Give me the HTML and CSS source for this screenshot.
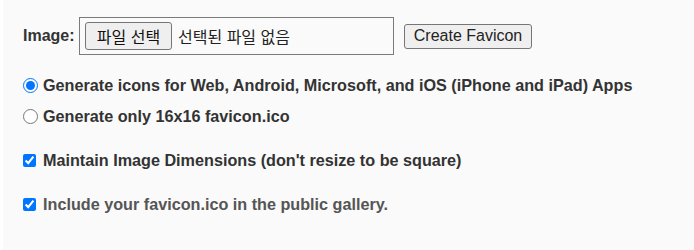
FILE: index.html
```html
<!DOCTYPE html>
<html lang="ko">
<head>
<meta charset="utf-8">
<title>Favicon Generator</title>
<link rel="stylesheet" href="styles.css">
</head>
<body>
<form class="form">
  <div class="row-image">
    <label class="img-label">Image:</label>
    <div class="filebox">
      <span class="file-btn">파일 선택</span>
      <span class="file-text">선택된 파일 없음</span>
    </div>
    <button type="button" class="create-btn">Create Favicon</button>
  </div>
  <label class="opt opt-r1"><input type="radio" name="mode" checked class="radio"><span>Generate icons for Web, Android, Microsoft, and iOS (iPhone and iPad) Apps</span></label>
  <label class="opt opt-r2"><input type="radio" name="mode" class="radio"><span>Generate only 16x16 favicon.ico</span></label>
  <label class="opt opt-c1"><input type="checkbox" checked class="check"><span>Maintain Image Dimensions (don't resize to be square)</span></label>
  <label class="opt opt-c2 light"><input type="checkbox" checked class="check"><span>Include your favicon.ico in the public gallery.</span></label>
</form>
</body>
</html>
```
FILE: styles.css
```css
html, body {
  margin: 0;
  padding: 0;
  background: #fafafa;
}
body {
  border-left: 3px solid #ffffff;
  height: 250px;
  box-sizing: border-box;
  font-family: "Liberation Sans", Arial, sans-serif;
  color: #333;
}
.form {
  display: flex;
  flex-direction: column;
  padding-left: 20px;
}
.row-image {
  display: flex;
  align-items: center;
  margin-top: 17px;
  height: 38px;
}
.img-label {
  font-weight: bold;
  font-size: 16px;
  color: #333;
  width: 56px;
}
.filebox {
  box-sizing: border-box;
  width: 315px;
  height: 38px;
  border: 1px solid #7a7a7a;
  padding: 0 5px;
  display: flex;
  align-items: center;
  font-family: "Liberation Sans", "Noto Sans CJK KR", sans-serif;
  font-size: 16px;
  color: #222;
}
.file-btn {
  box-sizing: border-box;
  height: 28px;
  width: 87px;
  border: 1px solid #767676;
  border-radius: 3px;
  background: #efefef;
  display: flex;
  align-items: center;
  justify-content: center;
  font-family: "Noto Sans CJK KR", sans-serif;
  font-size: 16px;
  color: #111;
}
.file-text {
  margin-left: 6px;
  font-family: "Noto Sans CJK KR", sans-serif;
  font-size: 16px;
  color: #222;
}
.create-btn {
  box-sizing: border-box;
  margin-left: 10px;
  height: 25px;
  width: 128px;
  border: 1px solid #767676;
  border-radius: 3px;
  background: #efefef;
  font-family: "Liberation Sans", Arial, sans-serif;
  font-size: 16px;
  color: #222;
  padding: 0;
}
.opt {
  display: flex;
  align-items: center;
  height: 20px;
  line-height: 20px;
  font-weight: bold;
  font-size: 16.2px;
  color: #333;
}
.opt.light { color: #555; }
.opt-r1 { margin-top: 20px; }
.opt-r2 { margin-top: 11px; }
.opt-c1 { margin-top: 24px; }
.opt-c2 { margin-top: 24px; }
.radio {
  margin: 0 5px 0 0;
  width: 15px;
  height: 15px;
}
.check {
  margin: 0 7px 0 0;
  width: 13px;
  height: 13px;
}
```
